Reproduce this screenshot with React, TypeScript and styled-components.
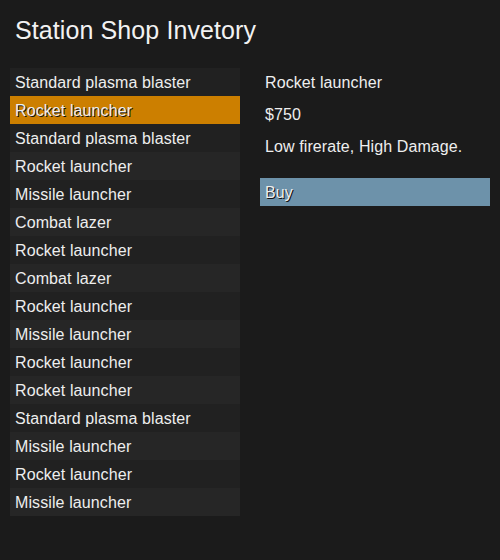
import React, { useState } from "react";
import styled, { createGlobalStyle } from "styled-components";

const Global = createGlobalStyle`
  html, body { margin: 0; padding: 0; background: #1b1b1b; }
  body { font-family: "Liberation Sans", Arial, sans-serif; color: #eeeeee; }
`;

const Page = styled.div`
  width: 500px;
  height: 560px;
  background: #1b1b1b;
  padding: 0 10px;
  box-sizing: border-box;
`;

const Title = styled.h1`
  margin: 0;
  padding: 16px 5px 0;
  height: 68px;
  box-sizing: border-box;
  font-size: 25px;
  font-weight: normal;
  line-height: 28px;
  letter-spacing: 0.1px;
  color: #f2f2f2;
`;

const Columns = styled.div`
  display: grid;
  grid-template-columns: 230px 230px;
  column-gap: 20px;
  align-items: start;
`;

const List = styled.ul`
  list-style: none;
  margin: 0;
  padding: 0;
`;

const Row = styled.li<{ $selected: boolean; $alt: boolean }>`
  height: 28px;
  line-height: 29px;
  padding: 0 5px;
  font-size: 16px;
  letter-spacing: 0.1px;
  background: ${(p) => (p.$selected ? "#cc7f00" : p.$alt ? "#262626" : "#212121")};
  color: #eeeeee;
  text-shadow: ${(p) => (p.$selected ? "1px 1px 0 #111" : "none")};
  cursor: pointer;
`;

const Details = styled.div`
  display: flex;
  flex-direction: column;
`;

const Line = styled.div`
  height: 32px;
  line-height: 29px;
  padding: 0 5px;
  font-size: 16px;
  letter-spacing: 0.1px;
  color: #eeeeee;
`;

const BuyButton = styled.button`
  margin-top: 14px;
  height: 28px;
  width: 230px;
  border: none;
  background: #6d92aa;
  color: #eeeeee;
  text-align: left;
  padding: 0 5px;
  font-family: "Liberation Sans", Arial, sans-serif;
  font-size: 16px;
  line-height: 29px;
  letter-spacing: 0.1px;
  text-shadow: 1px 1px 0 #111;
`;

const items = [
  "Standard plasma blaster",
  "Rocket launcher",
  "Standard plasma blaster",
  "Rocket launcher",
  "Missile launcher",
  "Combat lazer",
  "Rocket launcher",
  "Combat lazer",
  "Rocket launcher",
  "Missile launcher",
  "Rocket launcher",
  "Rocket launcher",
  "Standard plasma blaster",
  "Missile launcher",
  "Rocket launcher",
  "Missile launcher",
];

export default function App() {
  const [sel, setSel] = useState(1);
  return (
    <Page>
      <Global />
      <Title>Station Shop Invetory</Title>
      <Columns>
        <List>
          {items.map((it, i) => (
            <Row key={i} $selected={i === sel} $alt={i % 2 === 1} onClick={() => setSel(i)}>
              {it}
            </Row>
          ))}
        </List>
        <Details>
          <Line>Rocket launcher</Line>
          <Line>$750</Line>
          <Line>Low firerate, High Damage.</Line>
          <BuyButton>Buy</BuyButton>
        </Details>
      </Columns>
    </Page>
  );
}
